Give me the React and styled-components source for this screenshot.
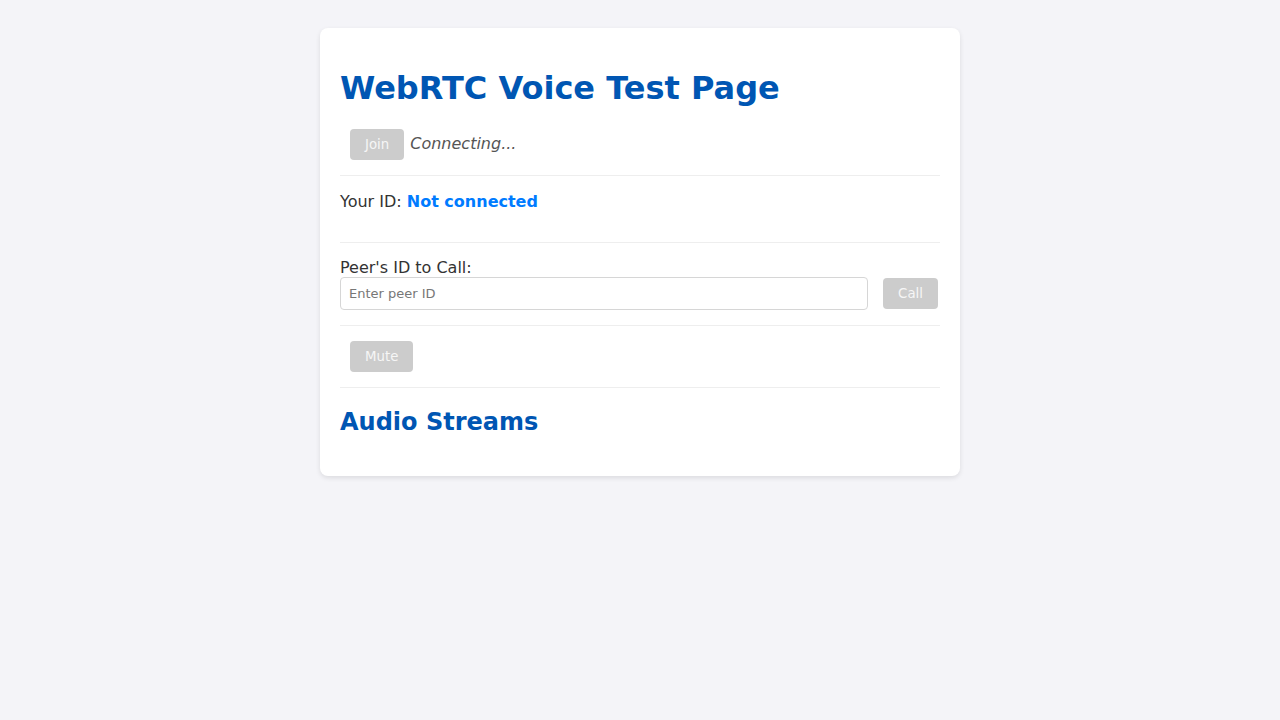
import React from "react";
import styled, { createGlobalStyle } from "styled-components";

const Global = createGlobalStyle`
  html, body { margin: 0; padding: 0; }
  body {
    background: #f4f4f8;
    font-family: "DejaVu Sans", sans-serif;
    color: #333;
  }
`;

const Page = styled.div`
  padding: 28px 20px 20px;
`;

const Card = styled.div`
  width: 600px;
  margin: 0 auto;
  background: #fff;
  border-radius: 8px;
  padding: 21px 20px 20px;
  box-shadow: 0 2px 5px rgba(0, 0, 0, 0.1);
`;

const Title = styled.h1`
  font-size: 32px;
  font-weight: bold;
  color: #0056b3;
  margin: 21.44px 0;
  line-height: 37px;
`;

const SubTitle = styled.h2`
  font-size: 24px;
  font-weight: bold;
  color: #0056b3;
  margin: 20px 0;
  line-height: 28px;
`;

const Section = styled.div`
  display: ${(p) => (p.$row ? "flex" : "block")};
  align-items: center;
  gap: ${(p) => p.$gap || 0}px;
  padding: ${(p) => p.$pt ?? 15}px 0 ${(p) => p.$pb ?? 15}px;
  border-bottom: 1px solid #eee;
`;

const Button = styled.button`
  font-family: "DejaVu Sans", sans-serif;
  font-size: 13.33px;
  background: #ccc;
  color: #f6f6f6;
  border: none;
  border-radius: 4px;
  height: 31px;
  padding: 0 15px;
  margin: 0 ${(p) => p.$mr ?? 0}px 0 ${(p) => p.$ml ?? 10}px;
  flex-shrink: 0;
`;

const Status = styled.span`
  font-style: italic;
  color: #555;
  font-size: 16px;
  padding-bottom: 2px;
`;

const Text = styled.div`
  font-size: 16px;
  line-height: 19px;
`;

const Strong = styled.strong`
  color: #007bff;
`;

const InputRow = styled.div`
  display: flex;
  align-items: center;
  gap: 5px;
`;

const Input = styled.input`
  flex: 1;
  height: 33px;
  box-sizing: border-box;
  border: 1px solid #d6d6d6;
  border-radius: 4px;
  padding: 0 8px;
  font-family: "DejaVu Sans", sans-serif;
  font-size: 13px;
  &::placeholder { color: #777; }
`;

export default function App() {
  return (
    <>
      <Global />
      <Page>
        <Card>
          <Title>WebRTC Voice Test Page</Title>
          <Section $row $gap={6} $pt={0}>
            <Button disabled>Join</Button>
            <Status>Connecting...</Status>
          </Section>
          <Section $pt={16} $pb={31}>
            <Text>
              Your ID: <Strong>Not connected</Strong>
            </Text>
          </Section>
          <Section>
            <Text>Peer's ID to Call:</Text>
            <InputRow>
              <Input placeholder="Enter peer ID" />
              <Button disabled $mr={2}>Call</Button>
            </InputRow>
          </Section>
          <Section $row>
            <Button disabled>Mute</Button>
          </Section>
          <SubTitle>Audio Streams</SubTitle>
        </Card>
      </Page>
    </>
  );
}
